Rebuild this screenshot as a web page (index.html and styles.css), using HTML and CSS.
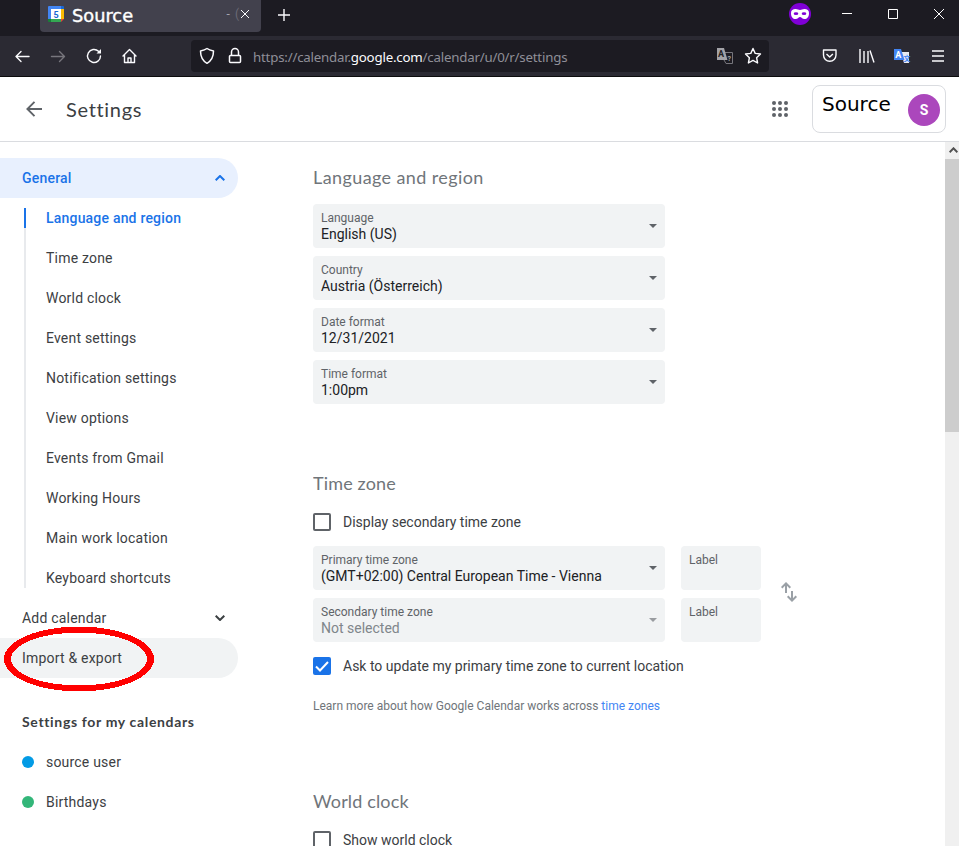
FILE: index.html
```html
<!DOCTYPE html>
<html lang="en">
<head>
<meta charset="utf-8">
<title>Settings</title>
<link rel="stylesheet" href="styles.css">
</head>
<body>
<div class="tabbar">
  <div class="tab">
    <svg class="favicon" width="16" height="16" viewBox="0 0 16 16"><path fill="#4285f4" d="M1 0h12v3H3v10H0V1a1 1 0 0 1 1-1z"/><path fill="#1967d2" d="M13 0h2a1 1 0 0 1 1 1v2h-3z"/><path fill="#fbbc04" d="M13 3h3v10h-3z"/><path fill="#34a853" d="M3 13h10v3H3z"/><path fill="#188038" d="M0 13h3v3H1a1 1 0 0 1-1-1z"/><path fill="#ea4335" d="M13 13h3l-3 3z"/><path fill="#fff" d="M3 3h10v10H3z"/><text x="8" y="11.500" text-anchor="middle">5</text></svg>
    <span class="tab-title">Source</span>
    <span class="tab-rest">- <span>(</span></span>
    <svg width="10" height="10" viewBox="0 0 10 10" class="line"><path d="M1 1l8 8M9 1L1 9"/></svg>
  </div>
  <svg class="newtab line" width="12" height="12" viewBox="0 0 12 12"><path stroke-width="1.400" d="M6 0v12M0 6h12"/></svg>
  <svg class="mask" width="22" height="22" viewBox="0 0 22 22"><circle cx="11" cy="11" r="11" fill="#8000d7"/><path fill="#fff" d="M2 10c0-3 2-4 4.500-4 2 0 3 1 4.500 1s2.500-1 4.500-1c2.500 0 4.500 1 4.500 4 0 4-2 6-4.500 6-2.500 0-3-2-4.500-2s-2 2-4.500 2S2 14 2 10z"/><ellipse cx="7" cy="10.700" rx="2.300" ry="1.400" fill="#8000d7"/><ellipse cx="15" cy="10.700" rx="2.300" ry="1.400" fill="#8000d7"/></svg>
  <svg class="wctl" width="106" height="12" viewBox="0 0 106 12"><g fill="none" stroke="#fff"><path d="M1 5.500h10M47.500 1.500h9v9h-9zM93 1l10 10M103 1L93 11"/></g></svg>
</div>
<div class="toolbar">
  <svg class="nav line" width="124" height="18" viewBox="0 0 124 18"><g stroke-width="1.400" stroke-linecap="round" stroke-linejoin="round"><path d="M15 9.500H2M7 4.500l-5 5 5 5"/><path stroke="#77767d" d="M37.500 9.500h13M45.500 4.500l5 5-5 5"/><path d="M86.500 9a6.500 6.500 0 1 1-2-4.700"/><path fill="#fbfbfe" d="M87 2v4.500h-4.500z" stroke="none"/><path d="M109 9l6.500-6.500L122 9M110.500 8v7.500h10V8M114 15.500V11h3v4.500"/></g></svg>
  <div class="urlbar">
    <svg class="line" width="16" height="18" viewBox="0 0 16 18"><path stroke-width="1.500" stroke-linejoin="round" d="M8 1.500c2 1.500 4 2 6.500 2.500C14.500 10 12 14 8 16.300 4 14 1.500 10 1.500 4 4 3.500 6 3 8 1.500z"/></svg>
    <svg class="lock line" width="14" height="18" viewBox="0 0 14 18"><path stroke-width="1.500" d="M2.500 8.500h9a1 1 0 0 1 1 1v5a1 1 0 0 1-1 1h-9a1 1 0 0 1-1-1v-5a1 1 0 0 1 1-1zM3.500 8.500V5a3.500 3.500 0 0 1 7 0v3.500"/></svg>
    <span class="url">https://calendar.<b>google.com</b>/calendar/u/0/r/settings</span>
    <svg class="tr" width="16" height="16" viewBox="0 0 16 16"><path fill="none" stroke="#77767d" d="M8 4.500h7.500v11H9L7 12"/><path fill="#a3a3a8" d="M0 0h7l3.500 12H0z"/><text x="1" y="9" fill="#222">A</text><text class="small" x="10.500" y="12.500" fill="#aaa">?</text></svg>
    <svg class="star line" width="18" height="18" viewBox="0 0 18 18"><path stroke-width="1.400" stroke-linejoin="round" d="M9 1.500l2.200 4.900 5.300.6-3.900 3.700 1 5.300L9 13.400 4.400 16l1-5.300L1.500 7l5.300-.6z"/></svg>
  </div>
  <svg class="tools" width="122" height="18" viewBox="0 0 122 18"><g class="line" stroke-width="1.400"><path stroke-linejoin="round" d="M1.500 3H14v5a6.200 6.200 0 0 1-12.500 0zM4.500 7l3.200 3 3.200-3"/><path d="M38 2v14M42 4v12M46 4v12M48 3.500l4 12"/><path d="M110 4h12M110 9h12M110 14h12"/></g><path fill="#e8eaf0" d="M79 5h8v11h-5z"/><path fill="#4285f4" d="M72 2h7l3.500 11H72z"/><text x="73.300" y="11" fill="#fff">A</text><text class="small" x="81.500" y="13.500" fill="#4285f4">文</text></svg>
</div>
<header class="header">
  <svg class="back" width="16" height="16" viewBox="0 0 16 16"><path fill="none" stroke="#5f6368" stroke-width="1.900" d="M16 8H1.500M8.500 .8L1.400 8l7.100 7.200"/></svg>
  <h1>Settings</h1>
  <svg class="apps" width="16" height="16" viewBox="0 0 16 16" fill="#5f6368"><circle cx="2" cy="2" r="2"/><circle cx="8" cy="2" r="2"/><circle cx="14" cy="2" r="2"/><circle cx="2" cy="8" r="2"/><circle cx="8" cy="8" r="2"/><circle cx="14" cy="8" r="2"/><circle cx="2" cy="14" r="2"/><circle cx="8" cy="14" r="2"/><circle cx="14" cy="14" r="2"/></svg>
  <div class="account"><span>Source</span><div class="avatar">S</div></div>
</header>
<div class="body">
  <nav class="side">
    <div class="row general">General<svg width="10" height="6" viewBox="0 0 10 6"><path d="M.7 5.300L5 1l4.300 4.300"/></svg></div>
    <div class="sub">
      <div class="item active">Language and region</div>
      <div class="item">Time zone</div>
      <div class="item">World clock</div>
      <div class="item">Event settings</div>
      <div class="item">Notification settings</div>
      <div class="item">View options</div>
      <div class="item">Events from Gmail</div>
      <div class="item">Working Hours</div>
      <div class="item">Main work location</div>
      <div class="item">Keyboard shortcuts</div>
    </div>
    <div class="row">Add calendar<svg width="10" height="6" viewBox="0 0 10 6"><path d="M.7 .7L5 5 9.300 .7"/></svg></div>
    <div class="row import">Import &amp; export<svg class="ring" width="152" height="66" viewBox="0 0 152 66"><path fill-rule="evenodd" d="M1 33a75 32.500 0 0 1 150 0a75 32.500 0 0 1-150 0zM8 33a68 26.500 0 0 0 136 0a68 26.500 0 0 0-136 0z"/></svg></div>
    <h3>Settings for my calendars</h3>
    <div class="row"><i class="dot blue"></i>source user</div>
    <div class="row"><i class="dot green"></i>Birthdays</div>
  </nav>
  <main class="main">
    <section class="lang">
      <h2>Language and region</h2>
      <div class="fields">
        <div class="field"><small>Language</small><span>English (US)</span></div>
        <div class="field"><small>Country</small><span>Austria (Österreich)</span></div>
        <div class="field"><small>Date format</small><span>12/31/2021</span></div>
        <div class="field"><small>Time format</small><span>1:00pm</span></div>
      </div>
    </section>
    <section class="zone">
      <h2 class="tight">Time zone</h2>
      <div class="check"><i class="box"></i>Display secondary time zone</div>
      <div class="zones">
        <div class="fields">
          <div class="field"><small>Primary time zone</small><span>(GMT+02:00) Central European Time - Vienna</span></div>
          <div class="field off"><small>Secondary time zone</small><span>Not selected</span></div>
        </div>
        <div class="fields labels">
          <div class="field"><small>Label</small></div>
          <div class="field"><small>Label</small></div>
        </div>
        <svg class="swap" width="16" height="20" viewBox="0 0 16 20"><path fill="none" stroke="#9aa0a6" stroke-width="2" d="M5 11V2M.7 5.700L5 1.400l4.300 4.300M11 9v9M6.700 14.300l4.300 4.300 4.300-4.300"/></svg>
      </div>
      <div class="check"><i class="box on"><svg width="18" height="18" viewBox="0 0 18 18"><path fill="none" stroke="#fff" stroke-width="2" d="M3 9.500l4 4 8-8.500"/></svg></i>Ask to update my primary time zone to current location</div>
      <p>Learn more about how Google Calendar works across <a>time zones</a></p>
    </section>
    <section class="clock">
      <h2 class="tight">World clock</h2>
      <div class="check"><i class="box"></i>Show world clock</div>
    </section>
  </main>
  <div class="scroll"><div class="up"><svg width="9" height="6" viewBox="0 0 9 6"><path fill="none" stroke="#505050" stroke-width="2" d="M.6 5.200L4.500 1.300l3.900 3.900"/></svg></div><div class="thumb"></div></div>
</div>
</body>
</html>
```
FILE: styles.css
```css
* { box-sizing: border-box; }
body { margin: 0; width: 959px; height: 846px; overflow: hidden; display: flex; flex-direction: column; background: #fff; font: 14px/20px Roboto, sans-serif; color: #3c4043; }
svg { display: block; flex: none; }
h1, h2, h3, p { margin: 0; font-weight: 400; }
.line { fill: none; stroke: #fbfbfe; }
.tabbar { height: 36px; flex: none; background: #1c1b22; display: flex; align-items: flex-start; }
.tab { width: 221px; height: 32px; margin-left: 40px; padding: 0 11px 0 8px; background: #42414d; border-radius: 0 0 4px 4px; display: flex; align-items: center; }
.favicon { margin-bottom: 4px; }
.favicon text { font: bold 9px Roboto, sans-serif; fill: #1967d2; }
.tab-title { margin-left: 8px; font: 17.800px/28px "DejaVu Sans", sans-serif; color: #fff; -webkit-text-stroke: .4px #fff; }
.tab-rest { margin: 0 0 4px auto; color: #a5a4ae; font-size: 12px; letter-spacing: 1px; }
.tab-rest span { color: #6b6a76; }
.tab .line { margin: 0 0 4px 0; }
.newtab { margin: 9px 0 0 17px; }
.mask { margin: 3px 0 0 499px; }
.wctl { margin: 8px 0 0 30px; }
.toolbar { height: 41px; flex: none; background: #2b2a33; border-bottom: 1px solid #0c0c0d; display: flex; align-items: center; padding-left: 14px; }
.urlbar { margin-left: 53px; width: 578px; height: 32px; border-radius: 4px; background: #1c1b22; display: flex; align-items: center; padding: 0 7px 0 8px; }
.lock { margin-left: 13px; }
.url { margin: 2px 0 0 11px; font: 13.300px/20px "Noto Sans", sans-serif; letter-spacing: -.21px; color: #8f8f98; white-space: nowrap; }
.url b { font-weight: 400; color: #fbfbfe; }
.tr { margin-left: auto; }
.tr text, .tools text { font: bold 9px Roboto, sans-serif; }
.tr .small, .tools .small { font: bold 7px Roboto, "Noto Sans CJK JP", sans-serif; }
.star { margin-left: 11px; }
.tools { margin-left: 53px; }
.header { height: 65px; flex: none; border-bottom: 1px solid #dadce0; display: flex; align-items: center; padding-left: 26px; }
h1 { margin: 0 0 0 24px; font: 20px/28px Lato, sans-serif; letter-spacing: .68px; }
.apps { margin-left: auto; }
.account { margin: 0 13px 0 24px; width: 134px; height: 48px; border: 1px solid #dadce0; border-radius: 8px; display: flex; justify-content: space-between; padding: 0 5px 0 9px; color: #000; }
.account span { font: 20px/36px "DejaVu Sans", sans-serif; }
.avatar { width: 32px; height: 32px; margin-top: 8px; border-radius: 50%; background: #ab47bc; color: #fff; font-weight: 700; line-height: 33px; text-align: center; }
.body { flex: 1; min-height: 0; display: flex; }
.side { width: 313px; flex: none; padding-top: 16px; letter-spacing: .2px; }
.row { width: 238px; height: 40px; padding: 0 13px 0 22px; border-radius: 0 20px 20px 0; display: flex; align-items: center; position: relative; }
.row > svg:not(.ring) { margin-left: auto; fill: none; stroke: currentColor; stroke-width: 2; }
.general { background: #e8f0fe; color: #1a73e8; font-weight: 500; }
.sub { margin: 10px 0 10px 24px; border-left: 2px solid #e8eaed; }
.item { height: 20px; margin-bottom: 20px; padding-left: 20px; }
.item:last-child { margin-bottom: 0; }
.active { margin-left: -2px; border-left: 2px solid #1a73e8; color: #1a73e8; font-weight: 500; }
.import { background: #f1f3f4; }
.ring { position: absolute; left: 3px; top: -12px; fill: #f00; shape-rendering: crispEdges; }
h3 { margin: 24px 0 0 22px; font: 700 14px/40px Lato, sans-serif; letter-spacing: .66px; }
.dot { width: 12px; height: 12px; margin-right: 12px; border-radius: 50%; }
.blue { background: #039be5; }
.green { background: #33b679; }
.main { flex: 1; min-width: 0; overflow: hidden; padding-top: 23px; }
h2 { font: 18px/24px Lato, sans-serif; color: #70757a; letter-spacing: .4px; }
.tight { letter-spacing: .15px; }
.lang { height: 306px; }
.zone { height: 318px; }
.lang .fields { margin-top: 15px; }
.fields { width: 352px; display: flex; flex-direction: column; gap: 8px; }
.field { height: 44px; padding: 6px 8px; border-radius: 4px; background: #f1f3f4; position: relative; color: #202124; }
.field small, .field span { display: block; }
.field small { font-size: 12px; line-height: 16px; color: #5f6368; }
.field span { line-height: 16px; }
.field span::after { content: ""; position: absolute; right: 8px; top: 20px; border: 4px solid transparent; border-top-color: #5f6368; border-bottom: 0; }
.off span { color: #80868b; }
.off span::after { opacity: .6; }
.check { display: flex; align-items: center; height: 20px; margin-top: 17px; }
.box { width: 18px; height: 18px; margin-right: 12px; border: 2px solid #5f6368; border-radius: 2px; }
.on { border: 0; background: #1a73e8; }
.zones { margin-top: 14px; display: flex; align-items: center; }
.swap { margin-bottom: 4px; }
.labels { width: 80px; margin: 0 20px 0 16px; }
.zones + .check { margin-top: 14px; }
p { margin-top: 20px; font-size: 12px; color: #70757a; }
a { color: #4285f4; }
.scroll { width: 14px; flex: none; background: #f0f0f0; }
.up { height: 17px; display: grid; place-items: center; padding: 0 0 2px 2px; }
.thumb { height: 273px; background: #cdcdcd; }
```
